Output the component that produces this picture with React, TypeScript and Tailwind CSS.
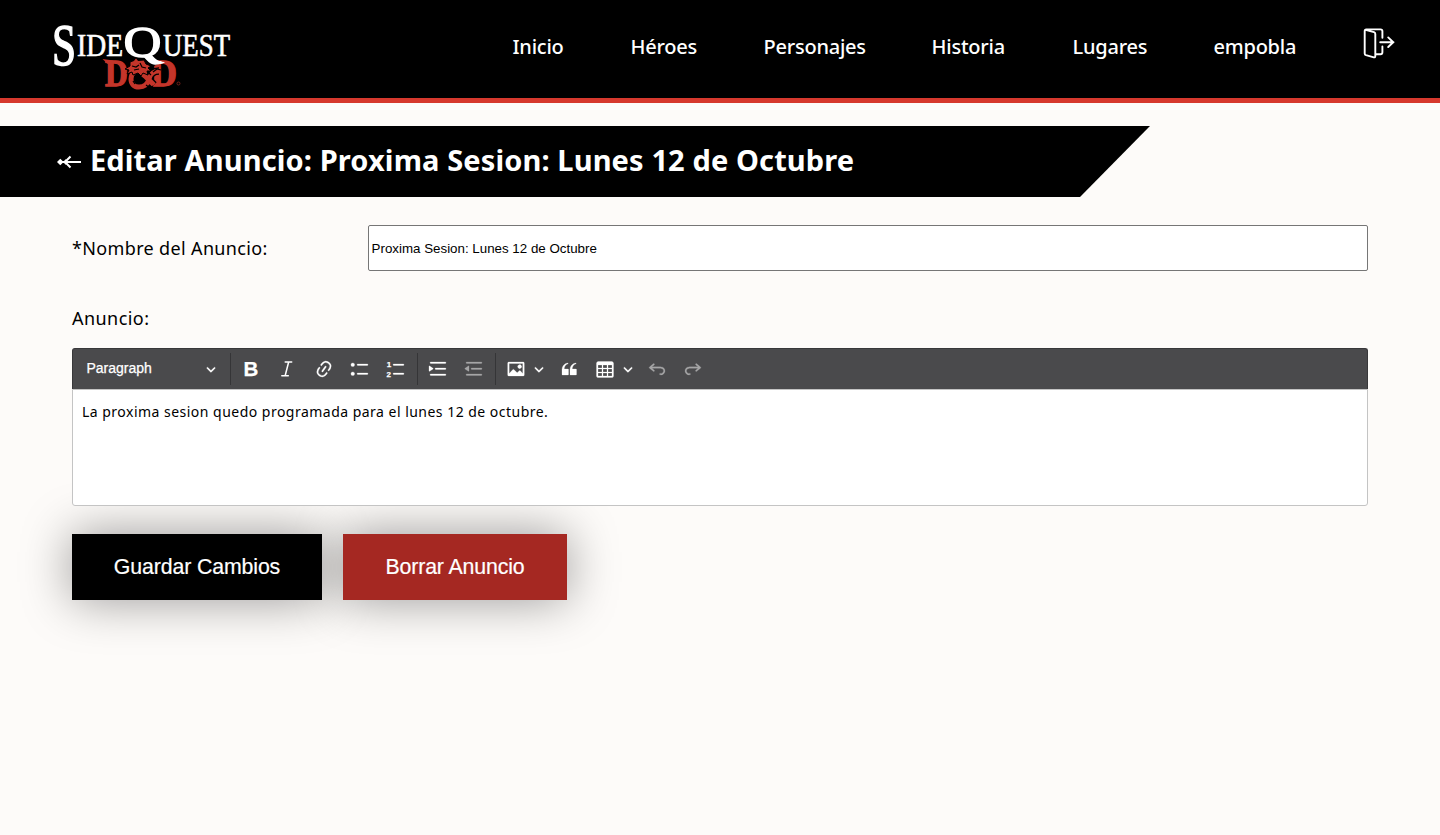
import React from "react";

const FONT = "font-['Noto_Sans',sans-serif]";
const ARIAL = "font-['Liberation_Sans',Arial,sans-serif]";

const AMPERSAND = "M143 70c-7-1-12 3-12 9 0 5 3 8 8 8 6 0 9-4 10-8 1-5 5-8 10-8M137 69l8 7 9 9";

function Logo() {
  return (
    <svg width="184" height="80" viewBox="48 16 184 80" className="block" fontFamily="'Liberation Serif', serif">
      <g fill="#c4352a" stroke="#c4352a" strokeWidth="1.300" fontWeight="700">
        <text x="105" y="86" fontSize="38" textLength="23" lengthAdjust="spacingAndGlyphs">D</text>
        <text x="151" y="86" fontSize="38" textLength="26" lengthAdjust="spacingAndGlyphs">D</text>
      </g>
      <circle cx="178.500" cy="83.500" r="1.500" fill="none" stroke="#7d231c" strokeWidth="0.900" />
      <path d="M102.500 59l11 1.500-4 5z" fill="#c4352a" />
      <g fill="none" strokeLinejoin="round">
        <path d={AMPERSAND} stroke="#000" strokeWidth="7.500" />
        <path d={AMPERSAND} stroke="#c4352a" strokeWidth="5" />
      </g>
      <path
        d="M130 62l4-1.500 2-3 2 3 6-.5 2 4 5 2-3 2 3 3-4 0 1 4-5-2-2 3-3-3-5 2-1-3-5 2 2-4-4-1 5-3z"
        fill="#c4352a"
        stroke="#000"
        strokeWidth="1"
      />
      <path
        d="M132 66l4 1 3-2M140 63l2 4 4 1M134 70l5-1M148 72l3 3M152 67c3-3 6-4 10-4M153 72l4-3 4 1M146 85l4 3 3-2M133 81l2 3"
        fill="none"
        stroke="#000"
        strokeWidth="1.200"
      />
      <g fill="#fff" stroke="#fff">
        <text x="52" y="65" fontSize="59" strokeWidth="1.500" textLength="24" lengthAdjust="spacingAndGlyphs">S</text>
        <text x="77" y="55.500" fontSize="31" strokeWidth="0.600" textLength="46" lengthAdjust="spacingAndGlyphs">IDE</text>
        <text x="163" y="55.500" fontSize="31" strokeWidth="0.600" textLength="67" lengthAdjust="spacingAndGlyphs">UEST</text>
        <text x="123.500" y="56.500" fontSize="45" strokeWidth="1.300" textLength="38" lengthAdjust="spacingAndGlyphs">Q</text>
      </g>
      <path d="M139 55c7 2 11 8 19 9 3 .3 6-.8 7-2-6 .5-11-4-14-8z" fill="#fff" />
    </svg>
  );
}

function LogoutIcon() {
  return (
    <svg width="32" height="32" viewBox="0 0 32 32" fill="none" stroke="#fff" strokeWidth="1.900" strokeLinejoin="round" strokeLinecap="round">
      <path d="M2.500 1.800L11 4.200q1.300.4 1.300 1.800V28q0 1.700-1.500 1.300L3 27.200q-1.300-.4-1.300-1.800V3q0-1.600 1.600-1.600h14.200q1.900 0 1.900 1.900v6.500M19.400 18.500v5.800q0 1.900-1.900 1.900h-4.800" />
      <path d="M17.200 14.200h13.300M25.200 9.400l5 4.800-5 4.800" />
    </svg>
  );
}

const NAV = [
  ["Inicio", "w-[118px]"],
  ["Héroes", "w-[133px]"],
  ["Personajes", "w-[168px]"],
  ["Historia", "w-[141px]"],
  ["Lugares", "w-[141px]"],
  ["empobla", "w-[149px]"],
];

const LINE_TOP = "M2 3.750c0 .414.336.75.75.75h14.500a.75.75 0 1 0 0-1.500H2.750a.75.75 0 0 0-.75.75z";
const LINE_MID = "M7 9.750c0 .414.336.75.75.75h9.500a.75.75 0 1 0 0-1.500h-9.500a.75.75 0 0 0-.75.75z";
const LINE_LOW = "M2.750 16.500h14.500a.75.75 0 1 0 0-1.500H2.750a.75.75 0 1 0 0 1.500z";
const LIST_LINES =
  "M7 5.750c0 .414.336.75.75.75h9.500a.75.75 0 1 0 0-1.500h-9.500a.75.75 0 0 0-.75.75zM7 14.750c0 .414.336.75.75.75h9.500a.75.75 0 1 0 0-1.500h-9.500a.75.75 0 0 0-.75.75z";
const UNDO =
  "M5.042 9.367l2.189 1.837a.75.75 0 0 1-.965 1.149l-3.788-3.180a.747.747 0 0 1-.210-.284.75.75 0 0 1 .170-.945L6.230 4.762a.75.75 0 1 1 .964 1.150L4.863 7.866h8.917A.75.75 0 0 1 14 7.900a4 4 0 1 1-1.477 7.718l.344-1.489a2.500 2.500 0 1 0 1.094-4.730l.008-.032H5.042z";

function Tool({ label, dim, children }: { label: string; dim?: boolean; children: React.ReactNode }) {
  return (
    <button aria-label={label} className={`flex h-10 w-9 shrink-0 items-center justify-center ${dim ? "opacity-50" : ""}`}>
      <svg width="20" height="20" viewBox="0 0 20 20" fill="#fff" stroke="#fff" strokeWidth="0.250">
        {children}
      </svg>
    </button>
  );
}

function Chevron() {
  return (
    <svg width="10" height="10" viewBox="0 0 10 10" fill="#fff" stroke="#fff" strokeWidth="0.200" className="shrink-0">
      <path d="M.941 4.523a.75.75 0 1 1 1.060-1.060l3.006 3.005 3.005-3.005a.75.75 0 1 1 1.060 1.060l-3.549 3.550a.75.75 0 0 1-1.168-.136L.941 4.523z" />
    </svg>
  );
}

function Separator() {
  return <span className="h-8 w-px shrink-0 bg-[#353537]" />;
}

function Toolbar() {
  return (
    <div className="flex h-[41px] items-center rounded-t-[3px] border border-b-0 border-[#38383a] bg-[#4a4a4c]">
      <button className={`flex w-[157px] items-center justify-between pr-[14px] pl-[13.5px] text-[14px] text-white ${ARIAL}`}>
        <span className="-mt-0.5 [-webkit-text-stroke:0.25px_white]">Paragraph</span>
        <Chevron />
      </button>
      <Separator />
      <div className="ml-0.5 flex">
        <Tool label="Bold">
          <text x="2.600" y="17" fontSize="20.500" fontWeight="700" fontFamily="'Liberation Sans', Arial, sans-serif">B</text>
        </Tool>
        <Tool label="Italic">
          <path d="M8.200 3.100h6.500M4.800 16.700h6.500M11.600 3.200L8.200 16.500" stroke="#fff" strokeWidth="1.500" strokeLinecap="round" fill="none" />
        </Tool>
        <span className="w-px" />
        <Tool label="Link">
          <path d="M11.077 15l.991-1.416a.75.75 0 1 1 1.229.86l-1.148 1.640a.748.748 0 0 1-.217.206 5.251 5.251 0 0 1-8.503-5.955.741.741 0 0 1 .12-.274l1.147-1.639a.75.75 0 1 1 1.228.86L4.933 10.700l.006.003a3.750 3.750 0 0 0 6.132 4.294l.006.003zm5.494-5.335a.748.748 0 0 1-.12.274l-1.147 1.639a.75.75 0 1 1-1.228-.86l.86-1.230a3.750 3.750 0 0 0-6.144-4.301l-.86 1.229a.75.75 0 0 1-1.229-.86l1.148-1.640a.748.748 0 0 1 .217-.206 5.251 5.251 0 0 1 8.503 5.955zm-4.563-2.532a.75.75 0 0 1 .184 1.045l-3.155 4.505a.75.75 0 1 1-1.229-.86l3.155-4.506a.75.75 0 0 1 1.045-.184z" />
        </Tool>
        <Tool label="Bulleted List">
          <path d={LIST_LINES} />
          <circle cx="2.750" cy="5.750" r="1.850" />
          <circle cx="2.750" cy="14.750" r="1.850" />
        </Tool>
        <Tool label="Numbered List">
          <path d={LIST_LINES} />
          <g fontSize="8" fontWeight="700" fontFamily="'Liberation Sans', Arial, sans-serif">
            <text x="0.800" y="8">1</text>
            <text x="0.500" y="18.300">2</text>
          </g>
        </Tool>
      </div>
      <span className="w-[3px]" />
      <Separator />
      <div className="ml-0.5 flex">
        <Tool label="Increase indent">
          <path d={LINE_TOP + LINE_MID + LINE_LOW} />
          <path d="M1.632 6.950L5.020 9.358a.4.4 0 0 1-.013.661l-3.390 2.207A.4.4 0 0 1 1 11.892V7.275a.4.4 0 0 1 .632-.326z" />
        </Tool>
        <Tool label="Decrease indent" dim>
          <path d={LINE_TOP + LINE_MID + LINE_LOW} />
          <path d="M4.368 6.950L.980 9.358a.4.4 0 0 0 .013.661l3.390 2.207A.4.4 0 0 0 5 11.892V7.275a.4.4 0 0 0-.632-.326z" />
        </Tool>
      </div>
      <span className="w-[3px]" />
      <Separator />
      <div className="ml-0.5 flex items-center">
        <Tool label="Insert image">
          <path d="M6.910 10.540c.26-.23.64-.21.88.03l3.360 3.140 2.230-2.060a.64.64 0 0 1 .87 0l2.520 2.970V4.500H3.200v10.120l3.710-4.080zm10.270-7.510c.6 0 1.090.47 1.090 1.050v11.840c0 .59-.49 1.060-1.090 1.060H2.790c-.6 0-1.090-.47-1.090-1.060V4.080c0-.58.49-1.050 1.100-1.050h14.380zm-5.220 5.560a1.960 1.960 0 1 1 3.400-1.960 1.960 1.960 0 0 1-3.400 1.960z" />
        </Tool>
        <Chevron />
        <span className="w-[7px]" />
        <Tool label="Block quote">
          <path d="M3 10.423a6.500 6.500 0 0 1 6.056-6.408l.038.670C6.448 5.423 5.354 7.663 5.220 10H9c.552 0 .5.432.5.986v4.511c0 .554-.448.503-1 .503h-5c-.552 0-.5-.449-.5-1.003v-4.574zm8 0a6.500 6.500 0 0 1 6.056-6.408l.038.670c-2.646.739-3.740 2.979-3.873 5.315H17c.552 0 .5.432.5.986v4.511c0 .554-.448.503-1 .503h-5c-.552 0-.5-.449-.5-1.003v-4.574z" />
        </Tool>
        <Tool label="Insert table">
          <path d="M3 6v3h4V6H3zm0 4v3h4v-3H3zm0 4v3h4v-3H3zm5 3h4v-3H8v3zm5 0h4v-3h-4v3zm4-4v-3h-4v3h4zm0-4V6h-4v3h4zm1.500 8a1.500 1.500 0 0 1-1.500 1.500H3A1.500 1.500 0 0 1 1.500 17V4c.222-.863 1.068-1.500 2-1.500h13c.932 0 1.778.637 2 1.500v13zM12 13v-3H8v3h4zm0-4V6H8v3h4z" />
        </Tool>
        <Chevron />
        <span className="w-[6px]" />
        <Tool label="Undo" dim>
          <path d={UNDO} />
        </Tool>
        <Tool label="Redo" dim>
          <path d={UNDO} transform="translate(20 0) scale(-1 1)" />
        </Tool>
      </div>
    </div>
  );
}

export default function App() {
  return (
    <div className={`min-h-[835px] bg-[#fdfbf9] text-black ${FONT}`}>
      <header className="flex h-[103px] justify-between border-b-[5px] border-[#d6382d] bg-black pl-12">
        <div className="pt-4">
          <Logo />
        </div>
        <nav className="flex w-[927.5px] pt-8 text-[20px] leading-[30px] font-medium tracking-[-0.23px] text-white">
          {NAV.map(([label, width]) => (
            <a key={label} href="#" className={`shrink-0 ${width}`}>
              {label}
            </a>
          ))}
          <a href="#" aria-label="Salir" className="-mt-1">
            <LogoutIcon />
          </a>
        </nav>
      </header>

      <div className="mt-[23px] flex h-[71px] w-[1150px] bg-black pl-[57px] text-white [clip-path:polygon(0_0,100%_0,1080px_100%,0_100%)]">
        <svg width="25" height="14" viewBox="0 0 25 14" fill="none" stroke="#fff" strokeWidth="2" className="mt-[29px] shrink-0">
          <path d="M3 7h21M13.500 1.500L8 7l5.500 5.500" />
          <path d="M0 7l3.300-3.300L6.600 7l-3.300 3.300z" fill="#fff" stroke="none" />
          <path d="M6 7l3-3v6z" fill="#fff" stroke="none" />
        </svg>
        <h1 className="ml-2 pt-[13px] text-[29px] leading-[42px] font-bold tracking-[0.12px] whitespace-nowrap">
          Editar Anuncio: Proxima Sesion: Lunes 12 de Octubre
        </h1>
      </div>

      <main className="px-[72px] pt-7">
        <div className="flex h-[46px] items-center">
          <label htmlFor="nombre" className="w-[296px] shrink-0 text-[18px] tracking-[0.35px]">
            *Nombre del Anuncio:
          </label>
          <input
            id="nombre"
            defaultValue="Proxima Sesion: Lunes 12 de Octubre"
            className={`h-full flex-1 rounded-[2px] border border-[#767676] bg-white px-[2.6px] text-[13.333px] ${ARIAL}`}
          />
        </div>
        <p className="mt-[33px] text-[18px] leading-7 tracking-[0.45px]">Anuncio:</p>
        <div className="relative z-10 mt-4">
          <Toolbar />
          <div className="h-[117px] rounded-b-[3px] border border-[#c4c4c4] bg-white px-[9px] pt-3 text-[14px] leading-5 tracking-[0.48px]">
            La proxima sesion quedo programada para el lunes 12 de octubre.
          </div>
        </div>
        <div className={`mt-7 flex gap-[21px] text-[21.300px] tracking-[-0.12px] text-white ${ARIAL}`}>
          <button className="h-[66px] w-[250px] bg-black pt-0.5 shadow-[0_0_50px_rgba(0,0,0,0.4)] [-webkit-text-stroke:0.2px_white]">Guardar Cambios</button>
          <button className="h-[66px] w-[224px] bg-[#a52822] pt-0.5 shadow-[0_0_50px_rgba(0,0,0,0.4)] [-webkit-text-stroke:0.2px_white]">Borrar Anuncio</button>
        </div>
      </main>
    </div>
  );
}
